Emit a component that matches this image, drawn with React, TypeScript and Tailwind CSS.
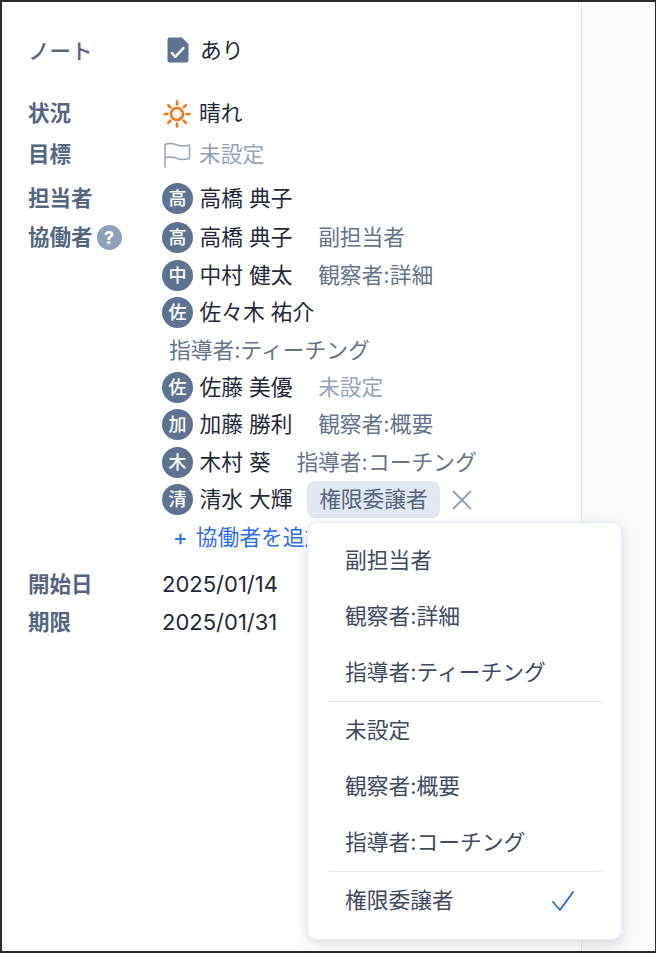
const font = { fontFamily: '"Inter", "Noto Sans CJK JP", sans-serif' };

const NoteIcon = () => (
  <svg width="22" height="26" viewBox="0 0 22 26" className="block">
    <path d="M2.500 0.500H15L21.500 7V23.500a2 2 0 0 1-2 2H2.500a2 2 0 0 1-2-2V2.500a2 2 0 0 1 2-2Z" fill="#5f7390" />
    <path d="M5 16L8.200 19.800L16.500 11" fill="none" stroke="#fff" strokeWidth="2.500" strokeLinecap="round" strokeLinejoin="round" />
  </svg>
);

const SunIcon = () => (
  <svg width="30" height="30" viewBox="0 0 30 30" className="block" fill="none" stroke="#f97316" strokeWidth="2.500" strokeLinecap="round">
    <circle cx="15" cy="15" r="6" />
    <path d="M15 2.500V5.500M15 24.500V27.500M2.500 15H5.500M24.500 15H27.500M6.200 6.200L8.300 8.300M21.700 21.700L23.800 23.800M6.200 23.800L8.300 21.700M21.700 8.300L23.800 6.200" />
  </svg>
);

const FlagIcon = () => (
  <svg width="28" height="26" viewBox="0 0 28 26" className="block" fill="none" stroke="#94a3b8" strokeWidth="1.500" strokeLinejoin="round" strokeLinecap="round">
    <path d="M2 25V2.500C6 1 10 1.500 14 3C18 4.500 22 4.500 26.500 3V16.500C22 18 18 18 14 16.500C10 15 6 14.500 2 16" />
  </svg>
);

const Avatar = ({ c }: { c: string }) => (
  <span className="flex h-[31px] w-[31px] shrink-0 items-center justify-center rounded-full bg-[#5f7390] text-[18px] font-medium text-white">{c}</span>
);

const Label = ({ children, h = 'h-[37px]' }: { children: React.ReactNode; h?: string }) => (
  <div className={`flex w-[134px] shrink-0 items-center text-[21.500px] font-bold text-[#55667e] ${h}`}>{children}</div>
);

const Person = ({ c, name, role, gap = 'ml-[25.500px]', muted }: { c: string; name: string; role?: string; gap?: string; muted?: boolean }) => (
  <div className="flex h-[37.500px] items-center">
    <Avatar c={c} />
    <span className="ml-[6.500px] whitespace-nowrap text-[21.750px] text-[#1f2937]">{name}</span>
    {role && <span className={`${gap} whitespace-nowrap text-[21.750px] ${muted ? 'text-[#94a3b8]' : 'text-[#64748b]'}`}>{role}</span>}
  </div>
);

const MenuItem = ({ text, h = 'h-[56px]', checked }: { text: string; h?: string; checked?: boolean }) => (
  <div className={`flex items-center justify-between pl-[37px] pr-[46px] text-[21.750px] text-[#3f4c5f] ${h}`}>
    <span>{text}</span>
    {checked && (
      <svg width="24" height="22" viewBox="0 0 24 22" fill="none" stroke="#2563eb" strokeWidth="1.800" strokeLinecap="round" strokeLinejoin="round">
        <path d="M2 12L9 20L22 2" />
      </svg>
    )}
  </div>
);

const Divider = () => <div className="ml-[19px] mr-[18px] my-[0.500px] h-[1px] bg-[#e2e8f0]" />;

export default function App() {
  return (
    <div style={font} className="h-[953px] w-[656px] overflow-hidden border-2 border-r-[1px] border-[#2b2b2b] bg-[#f8fafc]">
      <div className="relative h-full w-[580px] border-r border-[#e2e8f0] bg-white pl-[26px] pt-[31px]">
        <div className="flex h-[37px] items-center">
          <Label><span className="font-medium">ノート</span></Label>
          <span className="mb-[3px] ml-[5px] mr-[11px]"><NoteIcon /></span>
          <span className="mb-[3px] text-[21.750px] text-[#1f2937]">あり</span>
        </div>

        <div className="mt-[25px] flex h-[37px] items-center">
          <Label>状況</Label>
          <SunIcon />
          <span className="mb-[1px] ml-[7px] text-[21.750px] text-[#1f2937]">晴れ</span>
        </div>
        <div className="mt-[4px] flex h-[37px] items-center">
          <Label>目標</Label>
          <span className="ml-[1px]"><FlagIcon /></span>
          <span className="ml-[8px] text-[21.750px] text-[#94a3b8]">未設定</span>
        </div>
        <div className="mt-[7px] flex h-[37px] items-center">
          <Label>担当者</Label>
          <Avatar c="高" />
          <span className="ml-[6.500px] text-[21.750px] text-[#1f2937]">高橋 典子</span>
        </div>

        <div className="mt-[2px] flex">
          <Label>
            協働者
            <span className="ml-[4px] flex h-[25px] w-[25px] items-center justify-center rounded-full bg-[#8fa1ba] text-[18px] font-bold text-white">?</span>
          </Label>
          <div className="flex flex-col">
            <Person c="高" name="高橋 典子" role="副担当者" />
            <Person c="中" name="中村 健太" role="観察者:詳細" />
            <Person c="佐" name="佐々木 祐介" />
            <div className="flex h-[37px] items-center pl-[7px] text-[21.750px] text-[#64748b]">指導者:ティーチング</div>
            <Person c="佐" name="佐藤 美優" role="未設定" muted />
            <Person c="加" name="加藤 勝利" role="観察者:概要" />
            <Person c="木" name="木村 葵" role="指導者:コーチング" />
            <div className="flex h-[37.500px] items-center">
              <Avatar c="清" />
              <span className="ml-[6.500px] whitespace-nowrap text-[21.750px] text-[#1f2937]">清水 大輝</span>
              <span className="ml-[14px] flex h-[37px] items-center rounded-[8px] bg-[#e2e8f0] px-[12.500px] text-[21.750px] text-[#55667e]">権限委譲者</span>
              <svg width="22" height="22" viewBox="0 0 22 22" className="ml-[11px]" fill="none" stroke="#8fa1ba" strokeWidth="1.800" strokeLinecap="round">
                <path d="M2.500 2.500L19.500 19.500M19.500 2.500L2.500 19.500" />
              </svg>
            </div>
            <div className="flex h-[38px] items-center whitespace-nowrap pl-[11px] text-[21.750px] text-[#2f6fed]">
              <span className="mr-[8px] text-[22px] font-medium">+</span>協働者を追加
            </div>
          </div>
        </div>

        <div className="mt-[9px] flex h-[38px] items-center">
          <Label>開始日</Label>
          <span className="text-[22px] text-[#1f2937]">2025/01/14</span>
        </div>
        <div className="flex h-[38px] items-center">
          <Label>期限</Label>
          <span className="text-[22px] text-[#1f2937]">2025/01/31</span>
        </div>

        <div className="absolute left-[305px] top-[520px] h-[418px] w-[315px] rounded-[10px] border border-[#e8edf3] bg-white pb-[10px] pt-[9.500px] shadow-[0_4px_14px_rgba(71,85,105,0.2)]">
          <MenuItem text="副担当者" />
          <MenuItem text="観察者:詳細" />
          <MenuItem text="指導者:ティーチング" />
          <Divider />
          <MenuItem text="未設定" />
          <MenuItem text="観察者:概要" />
          <MenuItem text="指導者:コーチング" />
          <Divider />
          <MenuItem text="権限委譲者" checked />
        </div>
      </div>
    </div>
  );
}
